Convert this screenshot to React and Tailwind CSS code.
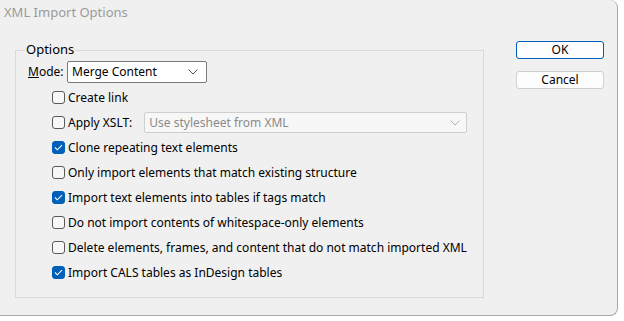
import { useState } from 'react'

const options = [
    { label: 'Create link', checked: false },
    { label: 'Apply XSLT:', checked: false, xslt: true },
    { label: 'Clone repeating text elements', checked: true },
    { label: 'Only import elements that match existing structure', checked: false },
    { label: 'Import text elements into tables if tags match', checked: true },
    { label: 'Do not import contents of whitespace-only elements', checked: false },
    { label: 'Delete elements, frames, and content that do not match imported XML', checked: false },
    { label: 'Import CALS tables as InDesign tables', checked: true },
]

const Chevron = ({ className }) => (
    <svg className={className} width="10" height="6" viewBox="0 0 10 6" fill="none">
        <path d="M0.5 0.5L5 5L9.5 0.5" stroke="currentColor" strokeWidth="1" />
    </svg>
)

const Checkbox = ({ checked, onChange }) => (
    <button
        onClick={onChange}
        className={`w-[13px] h-[13px] rounded-[3px] flex items-center justify-center shrink-0 ${checked ? 'bg-[#005fb8] border border-[#005fb8]' : 'bg-[#f7f7f7] border border-[#5a5a5a]'}`}
    >
        {checked && (
            <svg width="9" height="7" viewBox="0 0 9 7" fill="none">
                <path d="M1 3.5L3.3 5.8L8 1.2" stroke="white" strokeWidth="1.1" />
            </svg>
        )}
    </button>
)

const App = () => {
    const [checks, setChecks] = useState(options.map((o) => o.checked))

    const toggle = (idx) => {
        setChecks(checks.map((c, i) => (i === idx ? !c : c)))
    }

    return (
        <div className="w-[624px] h-[321px] bg-white font-['Noto_Sans',sans-serif] text-[12px] text-black overflow-hidden">
            <div className="w-[618px] h-[316px] bg-[#f0f0f0] border-r border-b border-[#a8a8a8] rounded-br-[8px] rounded-tr-[8px] flex flex-col">
                <div className="h-[27px] pl-[4px] pt-[3px] text-[13px] text-[#9a9a9a] leading-[18px]">XML Import Options</div>

                <div className="flex pl-[15px] pt-[14px]">
                    {/* Options group */}
                    <div className="relative w-[469px] h-[248px] border border-[#dadada] mt-[9px]">
                        <div className="absolute left-[9px] top-[-11px] bg-[#f0f0f0] px-[1px] text-[13px] leading-[18px]">Options</div>

                        <div className="flex items-center pl-[12px] pt-[10px]">
                            <span className="w-[39px]"><span className="underline">M</span>ode:</span>
                            <div className="w-[140px] h-[22px] bg-white border border-[#7a7a7a] rounded-[2px] flex items-center justify-between pl-[4px] pr-[8px]">
                                <span>Merge Content</span>
                                <Chevron className="text-[#555]" />
                            </div>
                        </div>

                        <div className="flex flex-col pl-[36px] pt-[2px]">
                            {options.map((opt, idx) => (
                                <div key={idx} className="h-[25px] flex items-center gap-[3px]">
                                    <Checkbox checked={checks[idx]} onChange={() => toggle(idx)} />
                                    <span className="whitespace-nowrap">{opt.label}</span>
                                    {opt.xslt && (
                                        <div className="ml-[9px] w-[323px] h-[21px] bg-[#f7f7f7] border border-[#cfcfcf] rounded-[2px] flex items-center justify-between pl-[4px] pr-[6px] text-[#8a8a8a]">
                                            <span>Use stylesheet from XML</span>
                                            <Chevron className="text-[#b0b0b0]" />
                                        </div>
                                    )}
                                </div>
                            ))}
                        </div>
                    </div>

                    {/* Buttons */}
                    <div className="flex flex-col gap-[12px] ml-[32px]">
                        <button className="w-[88px] h-[18px] bg-[#fdfdfd] border border-[#005fb8] rounded-[3px] leading-[16px]">OK</button>
                        <button className="w-[88px] h-[18px] bg-[#fdfdfd] border border-[#d0d0d0] rounded-[3px] leading-[16px]">Cancel</button>
                    </div>
                </div>
            </div>
        </div>
    )
}

export default App
